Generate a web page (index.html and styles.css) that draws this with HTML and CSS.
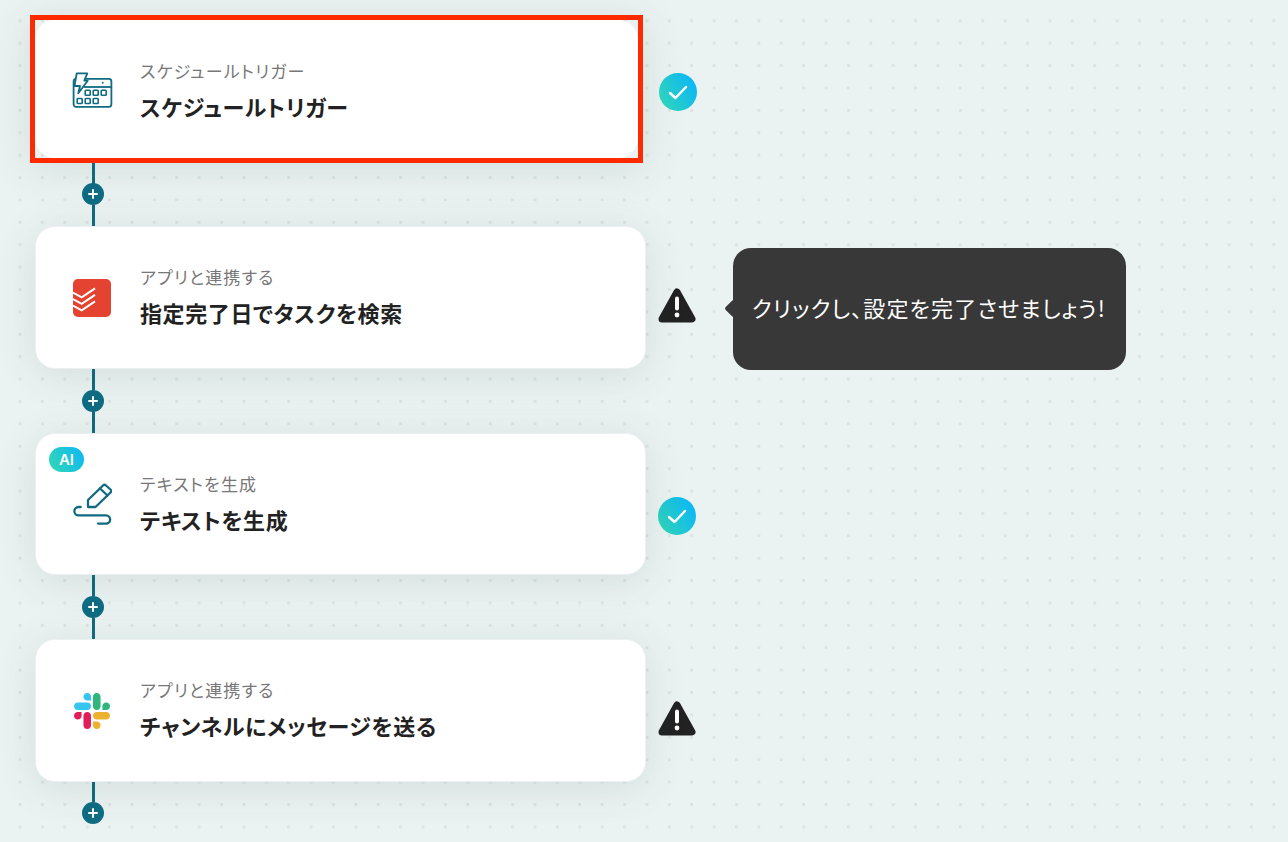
FILE: index.html
```html
<!DOCTYPE html>
<html lang="ja">
<head>
    <meta charset="UTF-8">
    <meta name="viewport" content="width=device-width, initial-scale=1.0">
    <title>フローボット</title>
    <link rel="stylesheet" href="styles.css">
</head>
<body>

    <div class="flow">

        <!-- ステップ 1 -->
        <div class="step">
            <div class="selected-frame">
                <div class="card card-selected">
                    <div class="card-icon">
                        <svg class="icon-calendar" width="42" height="38" viewBox="0 0 42 38" fill="none" stroke="#0f6b82" stroke-width="1.8" stroke-linejoin="round">
                            <rect x="2.6" y="7.9" width="37.8" height="27.9" rx="2.5"/>
                            <path d="M13 16H40"/>
                            <path d="M5.7 2.3H16.3L13.3 9.7H16.7L7.3 22.3L9 15H3.5Z" fill="#fff"/>
                            <circle cx="31.7" cy="11.7" r="1" fill="#0f6b82" stroke="none"/>
                            <g stroke-width="1.6">
                                <rect x="14.2" y="19.2" width="5" height="5" rx="0.7"/>
                                <rect x="22.2" y="19.2" width="5" height="5" rx="0.7"/>
                                <rect x="30.2" y="19.2" width="5" height="5" rx="0.7"/>
                                <rect x="6.2" y="27.5" width="5" height="5" rx="0.7"/>
                                <rect x="14.2" y="27.5" width="5" height="5" rx="0.7"/>
                                <rect x="22.2" y="27.5" width="5" height="5" rx="0.7"/>
                            </g>
                        </svg>
                    </div>
                    <div class="card-text">
                        <p class="card-sub">スケジュールトリガー</p>
                        <p class="card-title">スケジュールトリガー</p>
                    </div>
                </div>
            </div>
            <div class="status status-check status-first">
                <svg width="20" height="15" viewBox="0 0 20 15" fill="none" stroke="#fff" stroke-width="2.5" stroke-linecap="round" stroke-linejoin="round">
                    <path d="M2 8L7.5 13L18 2"/>
                </svg>
            </div>
        </div>

        <div class="connector connector-first">
            <span class="line"></span>
            <span class="plus"></span>
            <span class="line"></span>
        </div>

        <!-- ステップ 2 -->
        <div class="step">
            <div class="card">
                <div class="card-icon">
                    <svg width="38" height="38" viewBox="0 0 38 38">
                        <rect width="38" height="38" rx="5" fill="#e44332"/>
                        <g fill="none" stroke="#fff" stroke-width="2">
                            <path d="M0 13.7L8.7 18.3L22 9.3"/>
                            <path d="M0 20.2L8.7 24.8L22 15.8"/>
                            <path d="M0 26.7L8.7 31.3L22 22.3"/>
                        </g>
                    </svg>
                </div>
                <div class="card-text">
                    <p class="card-sub">アプリと連携する</p>
                    <p class="card-title">指定完了日でタスクを検索</p>
                </div>
            </div>
            <div class="status status-warn">
                <svg width="38" height="35" viewBox="0 0 38 35">
                    <path d="M19 4L34 31H4Z" fill="#222" stroke="#222" stroke-width="7" stroke-linejoin="round"/>
                    <rect x="17" y="8.5" width="4" height="14" rx="2" fill="#fff"/>
                    <circle cx="19" cy="27" r="2.4" fill="#fff"/>
                </svg>
            </div>
            <div class="tooltip">クリックし、設定を完了させましょう!</div>
        </div>

        <div class="connector">
            <span class="line"></span>
            <span class="plus"></span>
            <span class="line"></span>
        </div>

        <!-- ステップ 3 -->
        <div class="step">
            <div class="card card-short">
                <span class="ai-badge">AI</span>
                <div class="card-icon">
                    <svg width="40" height="44" viewBox="0 0 40 44" fill="none" stroke="#0f6b82" stroke-width="2.3" stroke-linecap="round" stroke-linejoin="round">
                        <path d="M16 18L31 3.5Q32.5 2 34 3.5L38.5 7.5Q40 9 38.5 10.5L23.5 25H16Z"/>
                        <path d="M28 6.5L35.5 13.5"/>
                        <path d="M8.7 25H6.5A4.15 4.15 0 0 0 6.5 33.3H34A4.15 4.15 0 0 1 34 41.6H26"/>
                    </svg>
                </div>
                <div class="card-text">
                    <p class="card-sub">テキストを生成</p>
                    <p class="card-title">テキストを生成</p>
                </div>
            </div>
            <div class="status status-check status-low">
                <svg width="20" height="15" viewBox="0 0 20 15" fill="none" stroke="#fff" stroke-width="2.5" stroke-linecap="round" stroke-linejoin="round">
                    <path d="M2 8L7.5 13L18 2"/>
                </svg>
            </div>
        </div>

        <div class="connector">
            <span class="line"></span>
            <span class="plus"></span>
            <span class="line"></span>
        </div>

        <!-- ステップ 4 -->
        <div class="step">
            <div class="card">
                <div class="card-icon">
                    <svg width="36" height="36" viewBox="0 0 122.8 122.8">
                        <path d="M25.8 77.6c0 7.1-5.8 12.9-12.9 12.9S0 84.7 0 77.6s5.8-12.9 12.9-12.9h12.9v12.9z" fill="#e01e5a"/>
                        <path d="M32.3 77.6c0-7.1 5.8-12.9 12.9-12.9s12.9 5.8 12.9 12.9v32.3c0 7.1-5.8 12.9-12.9 12.9s-12.9-5.8-12.9-12.9V77.6z" fill="#e01e5a"/>
                        <path d="M45.2 25.8c-7.1 0-12.9-5.8-12.9-12.9S38.1 0 45.2 0s12.9 5.8 12.9 12.9v12.9H45.2z" fill="#36c5f0"/>
                        <path d="M45.2 32.3c7.1 0 12.9 5.8 12.9 12.9s-5.8 12.9-12.9 12.9H12.9C5.8 58.1 0 52.3 0 45.2s5.8-12.9 12.9-12.9h32.3z" fill="#36c5f0"/>
                        <path d="M97 45.2c0-7.1 5.8-12.9 12.9-12.9s12.9 5.8 12.9 12.9-5.8 12.9-12.9 12.9H97V45.2z" fill="#2eb67d"/>
                        <path d="M90.5 45.2c0 7.1-5.8 12.9-12.9 12.9s-12.9-5.8-12.9-12.9V12.9C64.7 5.8 70.5 0 77.6 0s12.9 5.8 12.9 12.9v32.3z" fill="#2eb67d"/>
                        <path d="M77.6 97c7.1 0 12.9 5.8 12.9 12.9s-5.8 12.9-12.9 12.9-12.9-5.8-12.9-12.9V97h12.9z" fill="#ecb22e"/>
                        <path d="M77.6 90.5c-7.1 0-12.9-5.8-12.9-12.9s5.8-12.9 12.9-12.9h32.3c7.1 0 12.9 5.8 12.9 12.9s-5.8 12.9-12.9 12.9H77.6z" fill="#ecb22e"/>
                    </svg>
                </div>
                <div class="card-text">
                    <p class="card-sub">アプリと連携する</p>
                    <p class="card-title">チャンネルにメッセージを送る</p>
                </div>
            </div>
            <div class="status status-warn">
                <svg width="38" height="35" viewBox="0 0 38 35">
                    <path d="M19 4L34 31H4Z" fill="#222" stroke="#222" stroke-width="7" stroke-linejoin="round"/>
                    <rect x="17" y="8.5" width="4" height="14" rx="2" fill="#fff"/>
                    <circle cx="19" cy="27" r="2.4" fill="#fff"/>
                </svg>
            </div>
        </div>

        <div class="connector connector-last">
            <span class="line"></span>
            <span class="plus"></span>
        </div>

    </div>

</body>
</html>
```

FILE: styles.css
```css
html, body {
    height: 100%;
}

body {
    margin: 0;
    overflow: hidden;
    font-family: "Noto Sans CJK JP", "Noto Sans", sans-serif;
    background-color: #ebf3f2;
    background-image: radial-gradient(circle, #dce3e3 1.4px, transparent 1.7px);
    background-size: 22.4px 22.4px;
    background-position: 8.8px 9.6px;
}

/* フロー全体 */
.flow {
    display: flex;
    flex-direction: column;
    padding: 15px 0 0 35px;
}

.step {
    display: flex;
    align-items: flex-start;
    position: relative;
}

/* 選択中のカード(赤枠) */
.selected-frame {
    margin-left: -5px;
    border: 5px solid #ff2a00;
    box-shadow: 0 6px 40px rgba(30, 70, 70, 0.12);
}

.card {
    position: relative;
    display: flex;
    align-items: center;
    box-sizing: border-box;
    width: 611px;
    height: 143px;
    padding-left: 36px;
    background-color: #fff;
    border: 1px solid #edf0f0;
    border-radius: 20px;
    box-shadow: 0 6px 40px rgba(30, 70, 70, 0.12);
}

.card-selected {
    width: 603px;
    height: 138px;
    padding-left: 37px;
    border: none;
    box-shadow: none;
}

.card-short {
    height: 142px;
}

.card-icon {
    display: flex;
    justify-content: center;
    align-items: center;
    flex-shrink: 0;
    width: 40px;
    margin-right: 28px;
}

.icon-calendar {
    flex-shrink: 0;
    margin-top: 2px;
}

.card-text {
    margin-bottom: 4px;
}

.card-selected .card-text {
    margin-bottom: 0;
}

.card-sub {
    margin: 0 0 7px;
    font-size: 17px;
    line-height: 26px;
    letter-spacing: 1.2px;
    color: #777;
    font-feature-settings: "palt";
}

.card-title {
    margin: 0;
    font-size: 22px;
    line-height: 30px;
    letter-spacing: 0.6px;
    font-weight: 700;
    color: #222;
    font-feature-settings: "palt";
}

.ai-badge {
    position: absolute;
    left: 13px;
    top: 13px;
    width: 35px;
    height: 25px;
    border-radius: 13px;
    background: linear-gradient(60deg, #33d9b2, #0cb6f7);
    color: #fff;
    font-family: "Inter", "Noto Sans", sans-serif;
    font-size: 15px;
    font-weight: 600;
    line-height: 25px;
    text-align: center;
}

/* 右側のステータス */
.status {
    display: flex;
    justify-content: center;
    align-items: center;
    margin-left: 12px;
    width: 38px;
    height: 38px;
}

.status-check {
    border-radius: 50%;
    background: linear-gradient(60deg, #33d9b2, #0cb6f7 90%);
}

.status-first {
    margin-left: 16px;
    margin-top: 58px;
}

.status-low {
    margin-top: 64px;
}

.status-warn {
    height: 35px;
    margin-top: 62px;
}

/* 吹き出し */
.tooltip {
    position: absolute;
    left: 698px;
    top: 22px;
    display: flex;
    align-items: center;
    box-sizing: border-box;
    width: 393px;
    height: 122px;
    padding: 0 0 5px 19px;
    background-color: #383838;
    border-radius: 18px;
    color: #fff;
    font-size: 22px;
    letter-spacing: 1.15px;
    font-feature-settings: "palt";
    white-space: nowrap;
}

.tooltip::before {
    content: "";
    position: absolute;
    left: -6px;
    top: 54px;
    width: 13px;
    height: 13px;
    background-color: #383838;
    border-radius: 2px;
    transform: rotate(45deg);
}

/* カード間のコネクタ */
.connector {
    display: flex;
    flex-direction: column;
    align-items: center;
    width: 22px;
    height: 64px;
    margin-left: 47px;
}

.connector-first {
    height: 63px;
}

.connector-first .plus {
    margin-top: -1px;
}

.connector-last {
    height: 42px;
}

.line {
    flex: 1;
    width: 3px;
    background-color: #0f6b82;
}

.plus {
    position: relative;
    flex-shrink: 0;
    width: 22px;
    height: 22px;
    border-radius: 50%;
    background-color: #0f6b82;
}

.plus::before,
.plus::after {
    content: "";
    position: absolute;
    background-color: #fff;
    border-radius: 1px;
}

.plus::before {
    left: 6px;
    top: 10px;
    width: 10px;
    height: 2px;
}

.plus::after {
    left: 10px;
    top: 6px;
    width: 2px;
    height: 10px;
}
```
